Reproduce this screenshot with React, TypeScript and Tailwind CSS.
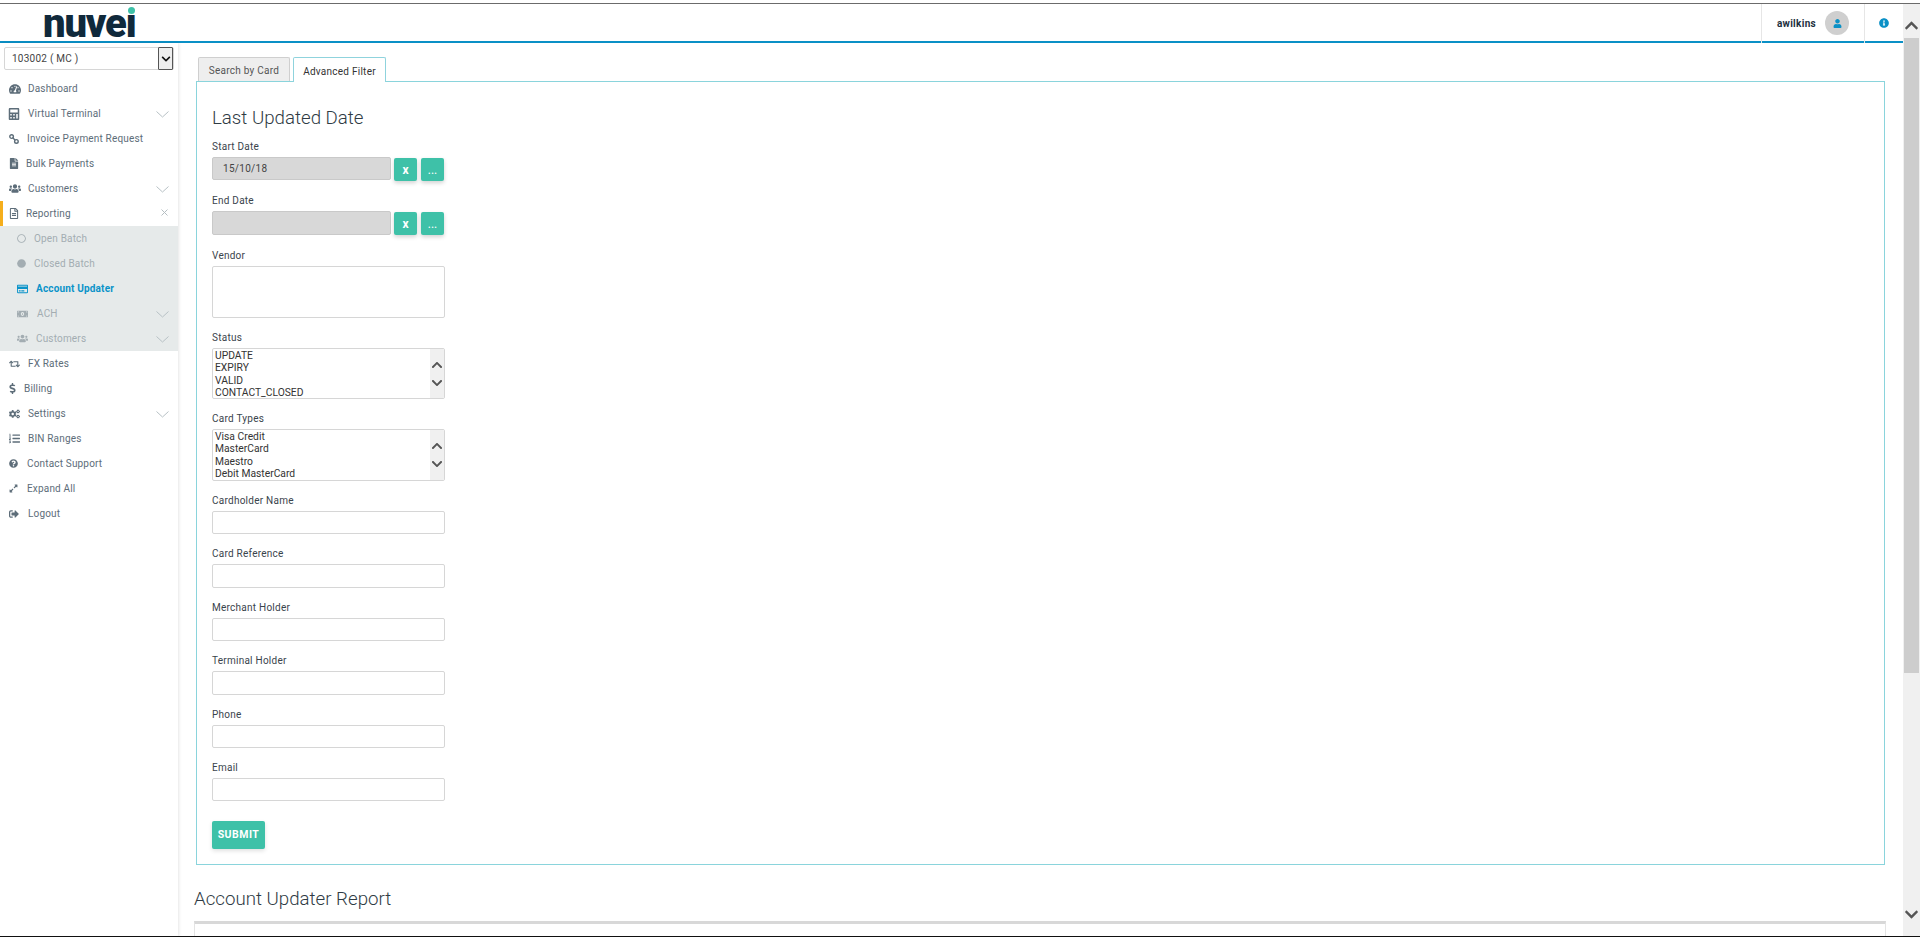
import type { ReactNode } from "react";
import {
  FaTachometerAlt,
  FaCalculator,
  FaFileAlt,
  FaUsers,
  FaRegFileAlt,
  FaRegCircle,
  FaCircle,
  FaRegCreditCard,
  FaMoneyBillAlt,
  FaRetweet,
  FaDollarSign,
  FaCogs,
  FaListOl,
  FaQuestionCircle,
  FaExpandAlt,
  FaSignOutAlt,
  FaUser,
  FaInfoCircle,
  FaChevronUp,
  FaChevronDown,
} from "react-icons/fa";

const font = "font-['Roboto','Liberation_Sans',sans-serif]";

type NavItem = {
  label: string;
  icon: ReactNode;
  text: string;
  more?: boolean;
  tone?: "sub" | "active";
};

function InvoiceIcon() {
  return (
    <svg width="10" height="10" viewBox="0 0 10 10" fill="none" className="ml-[9px]" stroke="currentColor" strokeWidth="1.4">
      <circle cx="2.6" cy="2.6" r="1.8" />
      <circle cx="7.4" cy="7.4" r="1.8" />
      <path d="M3.8 3.8 L6.2 6.2" />
    </svg>
  );
}

const navTop: NavItem[] = [
  { label: "Dashboard", icon: <FaTachometerAlt className="ml-[9px] w-[12px] text-[12px]" />, text: "ml-[7px]" },
  { label: "Virtual Terminal", icon: <FaCalculator className="ml-[8px] w-[12px] text-[12px]" />, text: "ml-[8px]", more: true },
  { label: "Invoice Payment Request", icon: <InvoiceIcon />, text: "ml-[8px]" },
  { label: "Bulk Payments", icon: <FaFileAlt className="ml-[9px] w-[10px] text-[11px]" />, text: "ml-[7px]" },
  { label: "Customers", icon: <FaUsers className="ml-[9px] w-[12px] text-[13px]" />, text: "ml-[7px]", more: true },
];

const navSub: NavItem[] = [
  { label: "Open Batch", icon: <FaRegCircle className="ml-[17px] w-[9px] text-[9px]" />, text: "ml-[8px]", tone: "sub" },
  { label: "Closed Batch", icon: <FaCircle className="ml-[17px] w-[9px] text-[9px]" />, text: "ml-[8px]", tone: "sub" },
  { label: "Account Updater", icon: <FaRegCreditCard className="ml-[17px] w-[11px] text-[12px]" />, text: "ml-[8px]", tone: "active" },
  { label: "ACH", icon: <FaMoneyBillAlt className="ml-[17px] w-[11px] text-[12px]" />, text: "ml-[9px]", tone: "sub", more: true },
  { label: "Customers", icon: <FaUsers className="ml-[17px] w-[11px] text-[13px]" />, text: "ml-[8px]", tone: "sub", more: true },
];

const navBottom: NavItem[] = [
  { label: "FX Rates", icon: <FaRetweet className="ml-[9px] w-[11px] text-[12px]" />, text: "ml-[8px]" },
  { label: "Billing", icon: <FaDollarSign className="ml-[9px] w-[7px] text-[11px]" />, text: "ml-[8px]" },
  { label: "Settings", icon: <FaCogs className="ml-[9px] w-[11px] text-[12px]" />, text: "ml-[8px]", more: true },
  { label: "BIN Ranges", icon: <FaListOl className="ml-[9px] w-[11px] text-[11px]" />, text: "ml-[8px]" },
  { label: "Contact Support", icon: <FaQuestionCircle className="ml-[9px] w-[9px] text-[9px]" />, text: "ml-[9px]" },
  { label: "Expand All", icon: <FaExpandAlt className="ml-[9px] w-[9px] text-[9px]" />, text: "ml-[9px]" },
  { label: "Logout", icon: <FaSignOutAlt className="ml-[9px] w-[10px] text-[10px]" />, text: "ml-[9px]" },
];

function ThinChevron() {
  return (
    <svg width="13" height="7" viewBox="0 0 13 7" fill="none" className="absolute right-[9px] top-[10px] text-[#b8c1c5]">
      <path d="M0.5 0.5 L6.5 6 L12.5 0.5" stroke="currentColor" strokeWidth="1" />
    </svg>
  );
}

function NavRow({ item }: { item: NavItem }) {
  const color =
    item.tone === "active" ? "text-[#0a93c9] font-bold" : item.tone === "sub" ? "text-[#a3adb2]" : "text-[#5d6d79]";
  return (
    <div className={`relative flex h-[25px] items-center text-[10px] tracking-[0.17px] ${color}`}>
      {item.icon}
      <span className={item.text}>{item.label}</span>
      {item.more && <ThinChevron />}
    </div>
  );
}

function Label({ children }: { children: ReactNode }) {
  return <div className="mb-[4px] h-[14px] text-[10px] leading-[16px] tracking-[0.25px] text-[#3a444c]">{children}</div>;
}

function DateField({ label, value, height, gap }: { label: string; value?: string; height: string; gap: string }) {
  return (
    <div className={gap}>
      <Label>{label}</Label>
      <div className="flex">
        <div className={`flex w-[179px] items-center rounded-[2px] border border-[#c9c9c9] bg-[#d8d8d8] pl-[10px] text-[10px] tracking-[0.3px] text-[#444] ${height}`}>
          {value}
        </div>
        <button className="ml-[3px] mt-px h-[23px] w-[23px] rounded-[2px] bg-[#3ec1a8] text-[12px] font-bold text-white shadow-[0_2px_4px_rgba(0,0,0,0.18)]">
          x
        </button>
        <button className="ml-[4px] mt-px h-[23px] w-[23px] rounded-[2px] bg-[#3ec1a8] text-[12px] text-white shadow-[0_2px_4px_rgba(0,0,0,0.18)]">
          ...
        </button>
      </div>
    </div>
  );
}

function TextField({ label, height }: { label: string; height: string }) {
  return (
    <div className="mb-[12px]">
      <Label>{label}</Label>
      <div className={`w-[233px] rounded-[2px] border border-[#d6d6d6] bg-white ${height}`} />
    </div>
  );
}

function ListField({ label, options, height }: { label: string; options: string[]; height: string }) {
  return (
    <div className="mb-[12px]">
      <Label>{label}</Label>
      <div className={`flex w-[233px] overflow-hidden rounded-[2px] border border-[#d6d6d6] bg-white ${height}`}>
        <div className="flex-1 pl-[2px] pt-[1px] text-[10.3px] leading-[12.3px] text-[#333]">
          {options.map((o) => (
            <div key={o}>{o}</div>
          ))}
        </div>
        <div className="flex w-[14px] flex-col items-center justify-center gap-[6px] bg-[#f0f0f0] text-[#555]">
          <FaChevronUp className="text-[12px]" />
          <FaChevronDown className="text-[12px]" />
        </div>
      </div>
    </div>
  );
}

export default function App() {
  return (
    <div className={`flex h-[937px] w-[1920px] flex-col overflow-hidden bg-white ${font}`}>
      <div className="h-[3px] shrink-0 bg-white" />
      <div className="h-px shrink-0 bg-[#6b6b6b]" />

      <div className="flex min-h-0 flex-1">
        <div className="flex min-w-0 flex-1 flex-col">
          {/* Header */}
          <div className="flex h-[39px] shrink-0">
            <div className="flex-1 border-b-2 border-[#0a90c6] pl-[43px] pt-px">
              <div className="relative w-fit text-[40px] font-black leading-[37px] tracking-[-1.2px] text-[#10293b]">
                nuveı
                <span className="absolute right-[1px] top-[2px] h-[7px] w-[7px] rounded-full bg-[#3ec1a8]" />
              </div>
            </div>
            <div className="w-px bg-[#e6e6e6]" />
            <div className="flex w-[102px] items-center justify-end border-b-2 border-[#0a90c6] pr-[15px] pt-[1px]">
              <span className="text-[10px] font-bold tracking-[0.3px] text-[#1d3040]">awilkins</span>
              <span className="ml-[9px] flex h-[24px] w-[24px] items-center justify-center rounded-full bg-[#cfcfcf] text-[#0a90c6]">
                <FaUser className="text-[9px]" />
              </span>
            </div>
            <div className="w-px bg-[#e6e6e6]" />
            <div className="flex w-[38px] items-center justify-center border-b-2 border-[#0a90c6] pr-[1px] pt-[1px] text-[#0a90c6]">
              <FaInfoCircle className="text-[10px]" />
            </div>
          </div>

          <div className="flex min-h-0 flex-1">
            {/* Sidebar */}
            <div className="w-[178px] shrink-0 shadow-[1px_0_3px_rgba(0,0,0,0.1)]">
              <div className="mx-[4px] mt-[4px] flex h-[23px] w-[170px] items-center rounded-[2px] border border-[#d6d6d6] pl-[7px] text-[10px] tracking-[0.25px] text-[#444]">
                <span className="flex-1">103002 ( MC )</span>
                <span className="flex h-[23px] w-[15px] items-center justify-center rounded-[1px] border border-[#555] bg-[#eeeeee] text-[#111]">
                  <FaChevronDown className="text-[10px]" />
                </span>
              </div>
              <div className="mt-[6px]">
                {navTop.map((item) => (
                  <NavRow key={item.label} item={item} />
                ))}
                <div className="relative flex h-[25px] items-center border-l-[3px] border-[#f5ae1c] text-[10px] tracking-[0.17px] text-[#5d6d79]">
                  <FaRegFileAlt className="ml-[6px] w-[10px] text-[11px]" />
                  <span className="ml-[7px]">Reporting</span>
                  <svg width="7" height="7" viewBox="0 0 7 7" fill="none" className="absolute right-[10px] top-[8px] text-[#b5bec2]">
                    <path d="M0.5 0.5 L6.5 6.5 M6.5 0.5 L0.5 6.5" stroke="currentColor" strokeWidth="1" />
                  </svg>
                </div>
                <div className="bg-[#e6eaea]">
                  {navSub.map((item) => (
                    <NavRow key={item.label} item={item} />
                  ))}
                </div>
                {navBottom.map((item) => (
                  <NavRow key={item.label} item={item} />
                ))}
              </div>
            </div>

            {/* Main */}
            <div className="min-w-0 flex-1 pl-[16px] pr-[17px] pt-[14px]">
              <div className="ml-[4px] flex h-[24px] text-[10px] tracking-[0.25px]">
                <div className="flex w-[92px] items-center justify-center rounded-t-[2px] border border-b-0 border-[#cfcfcf] bg-[#eeeeee] pt-[2px] text-[#555]">
                  Search by Card
                </div>
                <div className="relative z-10 ml-[3px] -mb-px flex h-[25px] w-[93px] items-center justify-center rounded-t-[2px] border border-b-0 border-[#8fd3dd] bg-white pt-[2px] text-[#333]">
                  Advanced Filter
                </div>
              </div>

              <div className="ml-[2px] mr-px border border-[#8ad4dc] pb-[15px] pl-[15px] pt-[24px]">
                <h2 className="mb-[9px] h-[24px] text-[18.7px] font-light leading-[24px] text-[#2f3b44]">Last Updated Date</h2>
                <DateField label="Start Date" value="15/10/18" height="h-[23px]" gap="mb-[12px]" />
                <DateField label="End Date" height="h-[24px]" gap="mb-[13px]" />
                <TextField label="Vendor" height="h-[52px]" />
                <ListField label="Status" options={["UPDATE", "EXPIRY", "VALID", "CONTACT_CLOSED"]} height="h-[51px]" />
                <ListField label="Card Types" options={["Visa Credit", "MasterCard", "Maestro", "Debit MasterCard"]} height="h-[52px]" />
                <TextField label="Cardholder Name" height="h-[23px]" />
                <TextField label="Card Reference" height="h-[24px]" />
                <TextField label="Merchant Holder" height="h-[23px]" />
                <TextField label="Terminal Holder" height="h-[24px]" />
                <TextField label="Phone" height="h-[23px]" />
                <TextField label="Email" height="h-[23px]" />
                <button className="mt-[20px] block h-[28px] w-[53px] rounded-[2px] bg-[#3ec1a8] text-[10.5px] font-bold tracking-[0.5px] text-white shadow-[0_2px_4px_rgba(0,0,0,0.12)]">
                  SUBMIT
                </button>
              </div>

              <h2 className="mt-[22px] h-[24px] text-[18.7px] font-light leading-[24px] text-[#2f3b44]">Account Updater Report</h2>
              <div className="mt-[10px] h-[40px] border-x border-t-[3px] border-x-[#e4e4e4] border-t-[#d8d8d8]" />
            </div>
          </div>
        </div>

        {/* Page scrollbar */}
        <div className="relative w-[17px] shrink-0 bg-[#f0f0f0] text-[#555]">
          <FaChevronUp className="absolute left-px top-[14px] text-[15px]" />
          <div className="absolute left-px top-[34px] h-[635px] w-[15px] bg-[#cdcdcd]" />
          <FaChevronDown className="absolute bottom-[14px] left-px text-[15px]" />
        </div>
      </div>

      <div className="h-px shrink-0 bg-[#111]" />
    </div>
  );
}
